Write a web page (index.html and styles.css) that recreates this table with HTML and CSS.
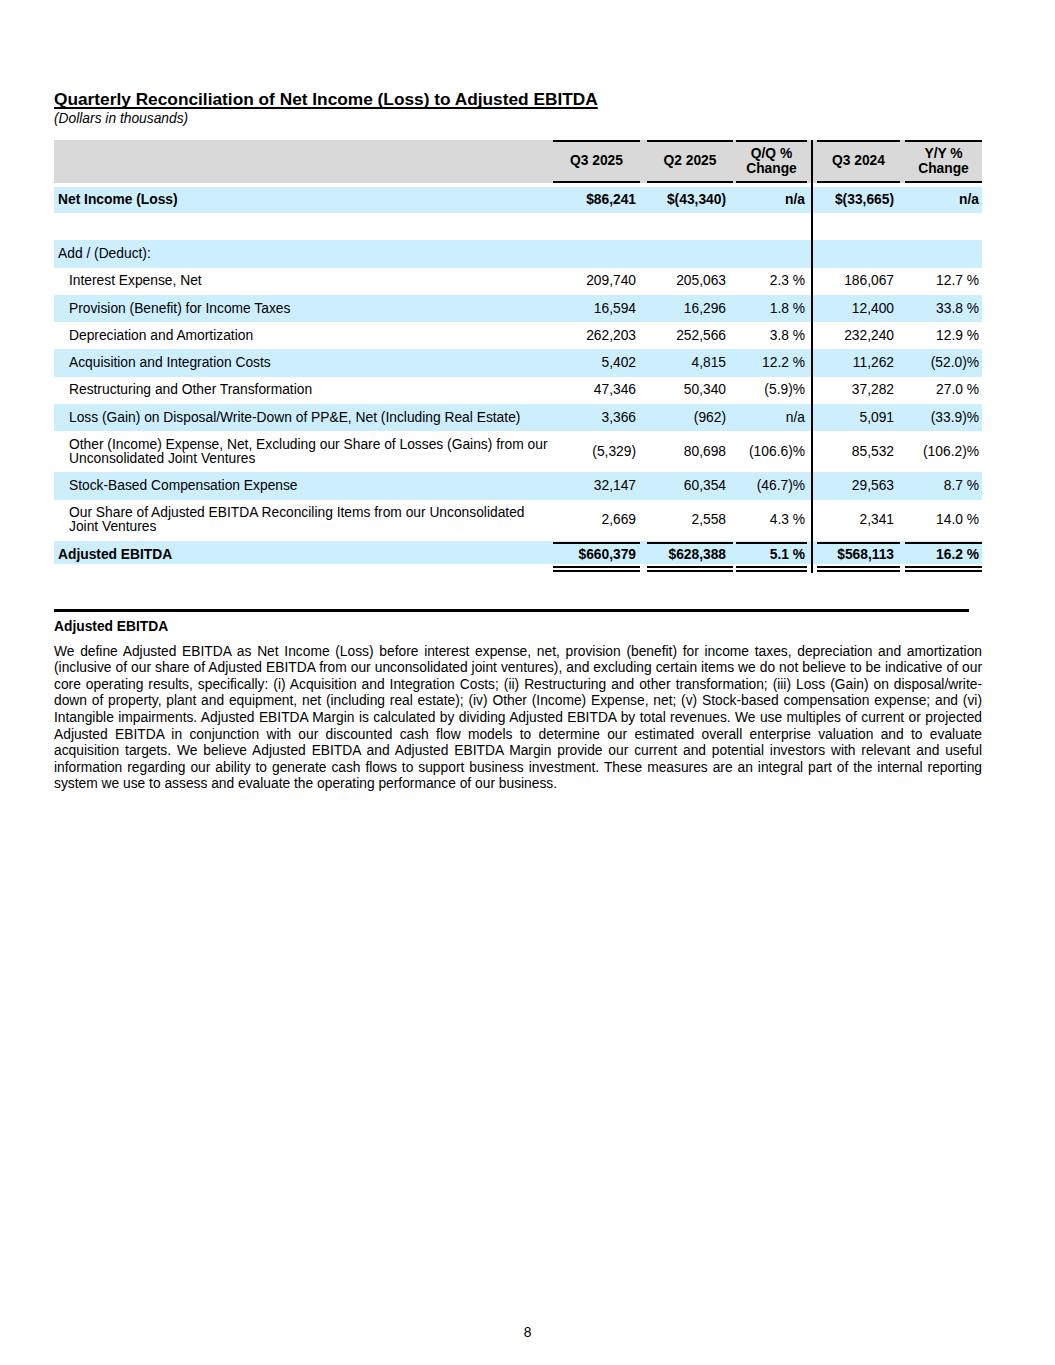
FILE: index.html
```html
<!DOCTYPE html>
<html>
<head>
<meta charset="utf-8">
<link rel="stylesheet" href="styles.css">
</head>
<body>
<div class="page">
  <h1 class="title">Quarterly Reconciliation of Net Income (Loss) to Adjusted EBITDA</h1>
  <div class="subtitle">(Dollars in thousands)</div>

  <table class="recon">
    <colgroup>
      <col class="w-label"><col class="w-c1"><col class="w-c2"><col class="w-c3"><col class="w-c4"><col class="w-c5">
    </colgroup>
    <thead>
      <tr class="head">
        <th class="label"></th>
        <th class="c1"><div class="v">Q3 2025</div></th>
        <th class="c2"><div class="v">Q2 2025</div></th>
        <th class="c3"><div class="v">Q/Q %<br>Change</div></th>
        <th class="c4"><div class="v">Q3 2024</div></th>
        <th class="c5"><div class="v">Y/Y %<br>Change</div></th>
      </tr>
    </thead>
    <tbody>
      <tr class="spacer"><td></td><td></td><td></td><td></td><td class="c4"></td><td></td></tr>
      <tr class="row blue bold r26">
        <td class="label">Net Income (Loss)</td>
        <td class="c1"><div class="v">$86,241</div></td>
        <td class="c2"><div class="v">$(43,340)</div></td>
        <td class="c3"><div class="v">n/a</div></td>
        <td class="c4"><div class="v">$(33,665)</div></td>
        <td class="c5"><div class="v">n/a</div></td>
      </tr>
      <tr class="row r27">
        <td class="label"></td><td class="c1"></td><td class="c2"></td><td class="c3"></td><td class="c4"></td><td class="c5"></td>
      </tr>
      <tr class="row blue r27">
        <td class="label">Add / (Deduct):</td><td class="c1"></td><td class="c2"></td><td class="c3"></td><td class="c4"></td><td class="c5"></td>
      </tr>
      <tr class="row r27">
        <td class="label ind">Interest Expense, Net</td>
        <td class="c1"><div class="v">209,740</div></td>
        <td class="c2"><div class="v">205,063</div></td>
        <td class="c3"><div class="v">2.3&nbsp;%</div></td>
        <td class="c4"><div class="v">186,067</div></td>
        <td class="c5"><div class="v">12.7&nbsp;%</div></td>
      </tr>
      <tr class="row blue r27">
        <td class="label ind">Provision (Benefit) for Income Taxes</td>
        <td class="c1"><div class="v">16,594</div></td>
        <td class="c2"><div class="v">16,296</div></td>
        <td class="c3"><div class="v">1.8&nbsp;%</div></td>
        <td class="c4"><div class="v">12,400</div></td>
        <td class="c5"><div class="v">33.8&nbsp;%</div></td>
      </tr>
      <tr class="row r27">
        <td class="label ind">Depreciation and Amortization</td>
        <td class="c1"><div class="v">262,203</div></td>
        <td class="c2"><div class="v">252,566</div></td>
        <td class="c3"><div class="v">3.8&nbsp;%</div></td>
        <td class="c4"><div class="v">232,240</div></td>
        <td class="c5"><div class="v">12.9&nbsp;%</div></td>
      </tr>
      <tr class="row blue r27">
        <td class="label ind">Acquisition and Integration Costs</td>
        <td class="c1"><div class="v">5,402</div></td>
        <td class="c2"><div class="v">4,815</div></td>
        <td class="c3"><div class="v">12.2&nbsp;%</div></td>
        <td class="c4"><div class="v">11,262</div></td>
        <td class="c5"><div class="v">(52.0)%</div></td>
      </tr>
      <tr class="row r27">
        <td class="label ind">Restructuring and Other Transformation</td>
        <td class="c1"><div class="v">47,346</div></td>
        <td class="c2"><div class="v">50,340</div></td>
        <td class="c3"><div class="v">(5.9)%</div></td>
        <td class="c4"><div class="v">37,282</div></td>
        <td class="c5"><div class="v">27.0&nbsp;%</div></td>
      </tr>
      <tr class="row blue r27">
        <td class="label ind">Loss (Gain) on Disposal/Write-Down of PP&amp;E, Net (Including Real Estate)</td>
        <td class="c1"><div class="v">3,366</div></td>
        <td class="c2"><div class="v">(962)</div></td>
        <td class="c3"><div class="v">n/a</div></td>
        <td class="c4"><div class="v">5,091</div></td>
        <td class="c5"><div class="v">(33.9)%</div></td>
      </tr>
      <tr class="row r41">
        <td class="label ind">Other (Income) Expense, Net, Excluding our Share of Losses (Gains) from our<br>Unconsolidated Joint Ventures</td>
        <td class="c1"><div class="v">(5,329)</div></td>
        <td class="c2"><div class="v">80,698</div></td>
        <td class="c3"><div class="v">(106.6)%</div></td>
        <td class="c4"><div class="v">85,532</div></td>
        <td class="c5"><div class="v">(106.2)%</div></td>
      </tr>
      <tr class="row blue r27">
        <td class="label ind">Stock-Based Compensation Expense</td>
        <td class="c1"><div class="v">32,147</div></td>
        <td class="c2"><div class="v">60,354</div></td>
        <td class="c3"><div class="v">(46.7)%</div></td>
        <td class="c4"><div class="v">29,563</div></td>
        <td class="c5"><div class="v">8.7&nbsp;%</div></td>
      </tr>
      <tr class="row r41">
        <td class="label ind">Our Share of Adjusted EBITDA Reconciling Items from our Unconsolidated<br>Joint Ventures</td>
        <td class="c1"><div class="v">2,669</div></td>
        <td class="c2"><div class="v">2,558</div></td>
        <td class="c3"><div class="v">4.3&nbsp;%</div></td>
        <td class="c4"><div class="v">2,341</div></td>
        <td class="c5"><div class="v">14.0&nbsp;%</div></td>
      </tr>
      <tr class="row total bold">
        <td class="label">Adjusted EBITDA</td>
        <td class="c1"><div class="v">$660,379</div></td>
        <td class="c2"><div class="v">$628,388</div></td>
        <td class="c3"><div class="v">5.1&nbsp;%</div></td>
        <td class="c4"><div class="v">$568,113</div></td>
        <td class="c5"><div class="v">16.2&nbsp;%</div></td>
      </tr>
    </tbody>
  </table>

  <hr class="rule">

  <h2 class="section">Adjusted EBITDA</h2>
  <p class="body">We define Adjusted EBITDA as Net Income (Loss) before interest expense, net, provision (benefit) for income taxes, depreciation and amortization (inclusive of our share of Adjusted EBITDA from our unconsolidated joint ventures), and excluding certain items we do not believe to be indicative of our core operating results, specifically: (i) Acquisition and Integration Costs; (ii) Restructuring and other transformation; (iii) Loss (Gain) on disposal/write-down of property, plant and equipment, net (including real estate); (iv) Other (Income) Expense, net; (v) Stock-based compensation expense; and (vi) Intangible impairments. Adjusted EBITDA Margin is calculated by dividing Adjusted EBITDA by total revenues. We use multiples of current or projected Adjusted EBITDA in conjunction with our discounted cash flow models to determine our estimated overall enterprise valuation and to evaluate acquisition targets. We believe Adjusted EBITDA and Adjusted EBITDA Margin provide our current and potential investors with relevant and useful information regarding our ability to generate cash flows to support business investment. These measures are an integral part of the internal reporting system we use to assess and evaluate the operating performance of our business.</p>

  <div class="pagenum">8</div>
</div>
</body>
</html>
```

FILE: styles.css
```css
* { box-sizing: border-box; }
html, body { margin: 0; padding: 0; background: #fff; }
body {
  font-family: "Liberation Sans", Arial, sans-serif;
  color: #000;
  font-size: 13.8px;
}
.page {
  width: 1055px;
  height: 1365px;
  display: flex;
  flex-direction: column;
  padding: 90px 0 0 54px;
}
.title {
  margin: 0;
  font-size: 17.3px;
  line-height: 19px;
  font-weight: bold;
  text-decoration: underline;
  text-decoration-thickness: 1.5px;
  text-underline-offset: 2px;
  text-decoration-skip-ink: none;
}
.subtitle {
  margin-top: 2px;
  font-style: italic;
  font-size: 13.8px;
  line-height: 16px;
}
.recon {
  margin-top: 13px;
  width: 928px;
  table-layout: fixed;
  border-collapse: separate;
  border-spacing: 0;
  font-size: 13.8px;
}
.w-label { width: 493px; }
.w-c1 { width: 93px; }
.w-c2 { width: 93px; }
.w-c3 { width: 78px; }
.w-c4 { width: 89px; }
.w-c5 { width: 82px; }

.recon th, .recon td { padding: 0; vertical-align: middle; }
.recon .c1 { padding-left: 6px; }
.recon .c2 { padding-left: 7px; }
.recon .c3 { padding-left: 3px; padding-right: 4px; }
.recon .c4 { padding-left: 4px; border-left: 2px solid #000; }
.recon .c5 { padding-left: 5px; }

.head th { background: #d9d9d9; height: 43px; font-weight: bold; }
.head .v {
  height: 43px;
  border-top: 2px solid #000;
  border-bottom: 2px solid #000;
  display: flex;
  align-items: center;
  justify-content: center;
  text-align: center;
  line-height: 14.5px;
}
.spacer td { height: 4px; }

.row td { line-height: 14px; white-space: nowrap; }
.r26 td { height: 26px; }
.r27 td { height: 27.3px; }
.r41 td { height: 41px; }
.blue td { background: #cdeefd; }
.bold td { font-weight: bold; }

.label { padding-left: 4px !important; text-align: left; }
.label.ind { padding-left: 15px !important; }

.row .v { text-align: right; }
.row .c1 .v { padding-right: 4px; }
.row .c2 .v { padding-right: 7px; }
.row .c3 .v { padding-right: 2px; }
.row .c4 .v { padding-right: 6px; }
.row .c5 .v { padding-right: 3px; }

.total td {
  height: 30px;
  background: linear-gradient(to bottom, #cdeefd calc(100% - 9px), #fff 0);
}
.total .label { padding-bottom: 6px; padding-top: 2px; }
.total .v {
  border-top: 2px solid #000;
  border-bottom: 6px double #000;
  padding-top: 4px;
  padding-bottom: 4px;
  margin-top: 1px;
  margin-bottom: 1px;
}

.rule {
  margin: 36px 0 0 0;
  width: 915px;
  height: 3px;
  border: 0;
  background: #000;
}
.section {
  margin: 7px 0 0 0;
  font-size: 13.8px;
  line-height: 16px;
  font-weight: bold;
}
.body {
  margin: 9px 0 0 0;
  width: 928px;
  font-size: 13.8px;
  line-height: 16.6px;
  text-align: justify;
}
.pagenum {
  margin-top: auto;
  margin-left: -54px;
  width: 1055px;
  text-align: center;
  line-height: 15px;
  padding-bottom: 25px;
}
```
